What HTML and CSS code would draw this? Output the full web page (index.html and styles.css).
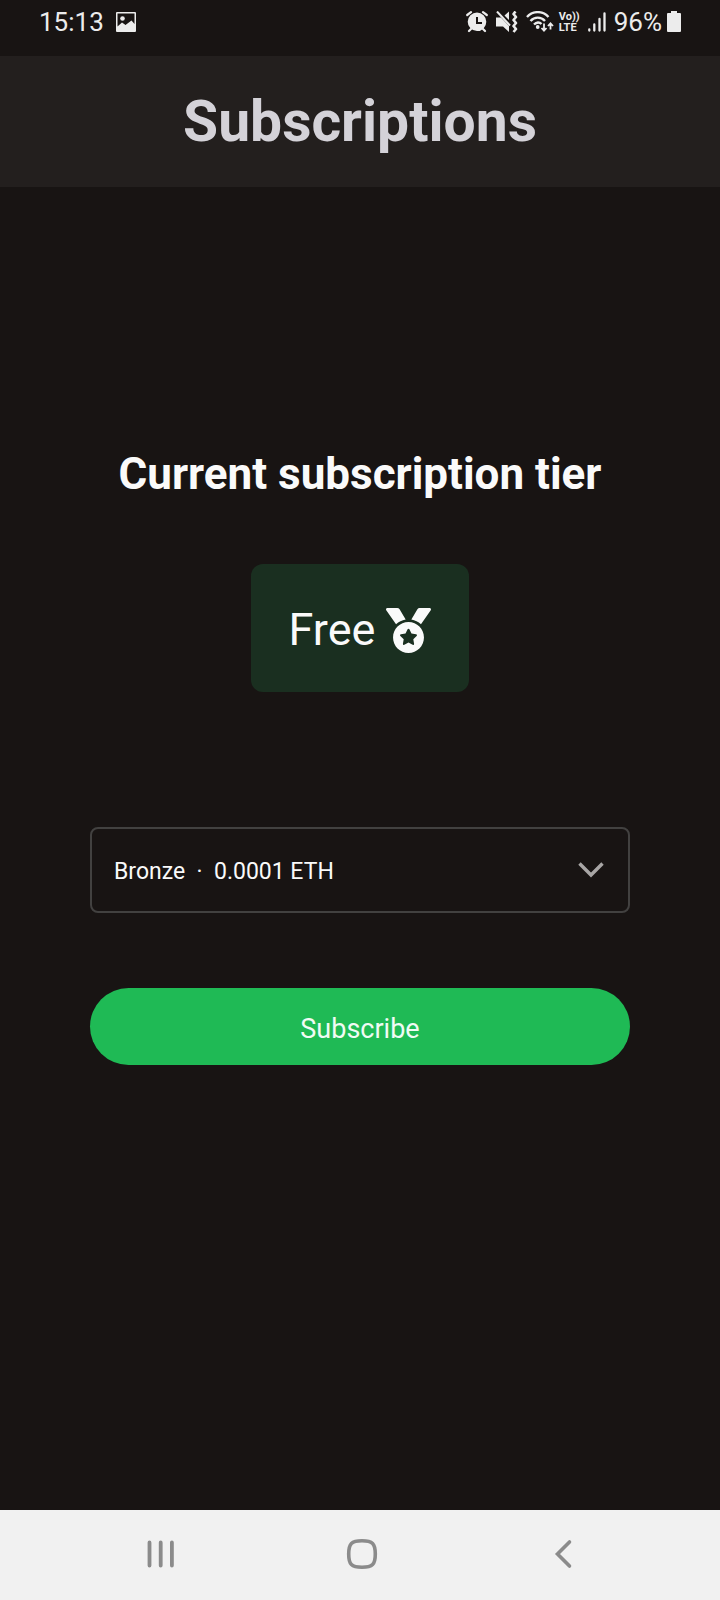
FILE: index.html
```html
<!DOCTYPE html>
<html lang="en">
<head>
<meta charset="utf-8">
<meta name="viewport" content="width=device-width, initial-scale=1">
<title>Subscriptions</title>
<link rel="stylesheet" href="styles.css">
</head>
<body>
<div class="status-bar">
  <div class="status-group">
    <span class="status-text">15:13</span>
    <svg class="icon-picture" width="20" height="20" viewBox="0 0 20 20" aria-hidden="true">
      <path fill="currentColor" fill-rule="evenodd" d="M1 0h18a1 1 0 0 1 1 1v18a1 1 0 0 1-1 1H1a1 1 0 0 1-1-1V1a1 1 0 0 1 1-1zM1.500 1.500v13l4.500-4 3.500 2.500 6-4.500 3 3.500V1.500z"/>
      <circle cx="6.500" cy="6.500" r="2.300" fill="currentColor"/>
    </svg>
  </div>
  <div class="status-group">
    <svg width="22" height="22" viewBox="0 0 22 22" aria-hidden="true">
      <g fill="none" stroke="currentColor" stroke-width="2.200" stroke-linecap="round">
        <path d="M1.200 4 5 1.200M20.800 4 17 1.200M5 18l-2 2M17 18l2 2"/>
      </g>
      <path fill="currentColor" fill-rule="evenodd" d="M11 1.500a9.300 9.300 0 1 1 0 18.600 9.300 9.300 0 0 1 0-18.600zM10 6v7h6v-2h-4V6z"/>
    </svg>
    <svg class="icon-mute" width="22" height="22" viewBox="0 0 22 22" aria-hidden="true">
      <path fill="currentColor" d="M0 6.500h5L13 15v6l-6-5.500H0zM13 .5V9L8.500 4.500z"/>
      <path fill="none" stroke="currentColor" stroke-width="2" d="m1 .5 13 14"/>
      <path fill="none" stroke="currentColor" stroke-width="2.600" stroke-linejoin="round" d="m19.500.5-2 2.500 2.500 3-2.500 3 2.500 3-2.500 3 2.500 3-2.500 3"/>
    </svg>
    <svg class="icon-wifi" width="28" height="22" viewBox="0 0 28 22" aria-hidden="true">
      <g fill="none" stroke="currentColor" stroke-width="2.400">
        <path d="M1 6c6-6.500 15.500-6.500 21.500 0M4.500 10c4-4.500 10.500-4.500 14.500 0M8 13.500c2.500-2.500 5.500-2.500 7.500-.5"/>
      </g>
      <circle cx="11.700" cy="16" r="1.900" fill="currentColor"/>
      <path fill="none" stroke="currentColor" stroke-width="1.800" d="M18 12.500v7M15.500 17l2.500 2.700 2.500-2.700M24.500 18.500v-6M22 15l2.500-2.700L27 15"/>
    </svg>
    <span class="volte"><span>Vo))</span><span>LTE</span></span>
    <svg class="icon-signal" width="18" height="20" viewBox="0 0 18 20" aria-hidden="true">
      <path fill="none" stroke="currentColor" stroke-width="2.300" stroke-linecap="round" d="M1.300 17.500v1M6.300 12.500v6M11.500 7v11.500M16.500 1.500v17"/>
    </svg>
    <span class="status-text">96%</span>
    <svg class="icon-battery" width="14" height="22" viewBox="0 0 14 22" aria-hidden="true">
      <path fill="currentColor" d="M4 0h6v2h3a1 1 0 0 1 1 1v17a1 1 0 0 1-1 1H1a1 1 0 0 1-1-1V3a1 1 0 0 1 1-1h3z"/>
    </svg>
  </div>
</div>

<header class="app-header"><h1 class="app-title">Subscriptions</h1></header>

<main class="content">
  <h2 class="tier-heading">Current subscription tier</h2>
  <div class="tier-badge">
    <span>Free</span>
    <svg width="45" height="45" viewBox="0 0 512 512" aria-hidden="true">
      <path fill="currentColor" d="M223.750 130.750L154.620 15.540A31.997 31.997 0 0 0 127.180 0H16.030C3.080 0-4.500 14.570 2.920 25.180l111.270 158.960c29.720-27.770 67.520-46.830 109.560-53.390zM495.970 0H384.820c-11.240 0-21.660 5.900-27.440 15.540l-69.130 115.210c42.040 6.560 79.840 25.620 109.560 53.380L509.080 25.180C516.500 14.570 508.920 0 495.970 0zM256 160c-97.200 0-176 78.800-176 176s78.800 176 176 176 176-78.800 176-176-78.800-176-176-176zm92.520 157.260l-37.930 36.960 8.970 52.220c1.600 9.360-8.260 16.510-16.650 12.090L256 393.880l-46.900 24.650c-8.400 4.450-18.250-2.740-16.650-12.090l8.970-52.220-37.930-36.960c-6.820-6.640-3.050-18.230 6.350-19.590l52.430-7.640 23.430-47.520c2.110-4.280 6.190-6.390 10.280-6.390 4.110 0 8.220 2.140 10.330 6.390l23.430 47.520 52.430 7.640c9.400 1.360 13.170 12.950 6.350 19.590z"/>
    </svg>
  </div>
  <form class="plan-form">
    <div class="select-wrap">
      <select class="plan-select" aria-label="Subscription plan">
        <option>Bronze&nbsp; ·&nbsp; 0.0001 ETH</option>
      </select>
      <svg class="select-arrow" width="26" height="18" viewBox="0 0 26 18" aria-hidden="true">
        <path fill="none" stroke="currentColor" stroke-width="3.400" d="m1.500 2.500 11.500 11.500 11.500-11.500"/>
      </svg>
    </div>
    <button class="subscribe" type="button">Subscribe</button>
  </form>
</main>

<nav class="nav-bar" aria-label="System navigation">
  <button class="nav-button" type="button" aria-label="Recent apps">
    <svg width="32" height="32" viewBox="0 0 32 32" aria-hidden="true"><path fill="none" stroke="currentColor" stroke-width="3.800" stroke-linecap="round" d="M4.500 4.500v23M15.700 4.500v23M26.900 4.500v23"/></svg>
  </button>
  <button class="nav-button" type="button" aria-label="Home">
    <svg width="32" height="32" viewBox="0 0 32 32" aria-hidden="true"><path fill="none" stroke="currentColor" stroke-width="3.600" d="M16 2.700c10.500 0 13.300 2.800 13.300 13.300S26.500 29.300 16 29.300 2.700 26.500 2.700 16 5.500 2.700 16 2.700z"/></svg>
  </button>
  <button class="nav-button" type="button" aria-label="Back">
    <svg width="32" height="32" viewBox="0 0 32 32" aria-hidden="true"><path fill="none" stroke="currentColor" stroke-width="3.600" stroke-linecap="round" d="M22.500 4 10.500 16l12 12"/></svg>
  </button>
</nav>
</body>
</html>
```

FILE: styles.css
```css
* {
  box-sizing: border-box;
}

body {
  margin: 0;
  min-height: 100vh;
  display: flex;
  flex-direction: column;
  background: #181413;
  color: #fafafa;
  font-family: Roboto, "Liberation Sans", sans-serif;
}

svg {
  display: block;
  flex: none;
}

.status-bar {
  display: flex;
  justify-content: space-between;
  height: 56px;
  padding: 6px 39px 18px;
  color: #ececec;
}

.status-group {
  display: flex;
  align-items: center;
}

.status-text {
  font-size: 26px;
  line-height: 32px;
}

.icon-picture {
  margin-left: 12px;
}

.icon-mute,
.icon-wifi {
  margin-left: 8px;
}

.volte {
  display: flex;
  flex-direction: column;
  margin-left: 5px;
  font-size: 11px;
  font-weight: 700;
  line-height: 11px;
}

.icon-signal {
  margin: 0 8px;
}

.icon-battery {
  margin-left: 5px;
}

.app-header {
  padding: 33px 0 32px;
  background: #231f1e;
  text-align: center;
}

.app-title {
  margin: 0;
  color: #d4d2d8;
  font-size: 57px;
  line-height: 66px;
}

.content {
  flex: 1;
  display: flex;
  flex-direction: column;
  align-items: center;
  padding: 260px 24px 48px;
}

.tier-heading {
  margin: 0;
  font-size: 44px;
  line-height: 54px;
  text-align: center;
}

.tier-badge {
  display: flex;
  align-items: center;
  gap: 11px;
  margin-top: 63px;
  padding: 39px 38px 35px;
  border-radius: 12px;
  background: #1a2f20;
  font-size: 45px;
  line-height: 54px;
}

.plan-form {
  display: flex;
  flex-direction: column;
  gap: 75px;
  width: 540px;
  max-width: 100%;
  margin-top: 135px;
}

.select-wrap {
  position: relative;
}

.plan-select {
  display: block;
  width: 100%;
  padding: 30px 64px 26px 22px;
  border: 2px solid #424140;
  border-radius: 8px;
  background: transparent;
  color: inherit;
  font-family: inherit;
  font-size: 23px;
  line-height: 26px;
  appearance: none;
}

.select-arrow {
  position: absolute;
  top: 34px;
  right: 26px;
  color: #a8a6a5;
  pointer-events: none;
}

.subscribe {
  padding: 25px 24px 20px;
  border: 0;
  border-radius: 40px;
  background: #1fba55;
  color: #f0fbf4;
  font-family: inherit;
  font-size: 27px;
  line-height: 32px;
}

.nav-bar {
  display: grid;
  grid-template-columns: repeat(3, 1fr);
  height: 90px;
  padding: 0 56px 3px 60px;
  background: #f1f1f1;
}

.nav-button {
  display: flex;
  align-items: center;
  justify-content: center;
  padding: 0;
  border: 0;
  background: none;
  color: #8b8b8b;
}
```
